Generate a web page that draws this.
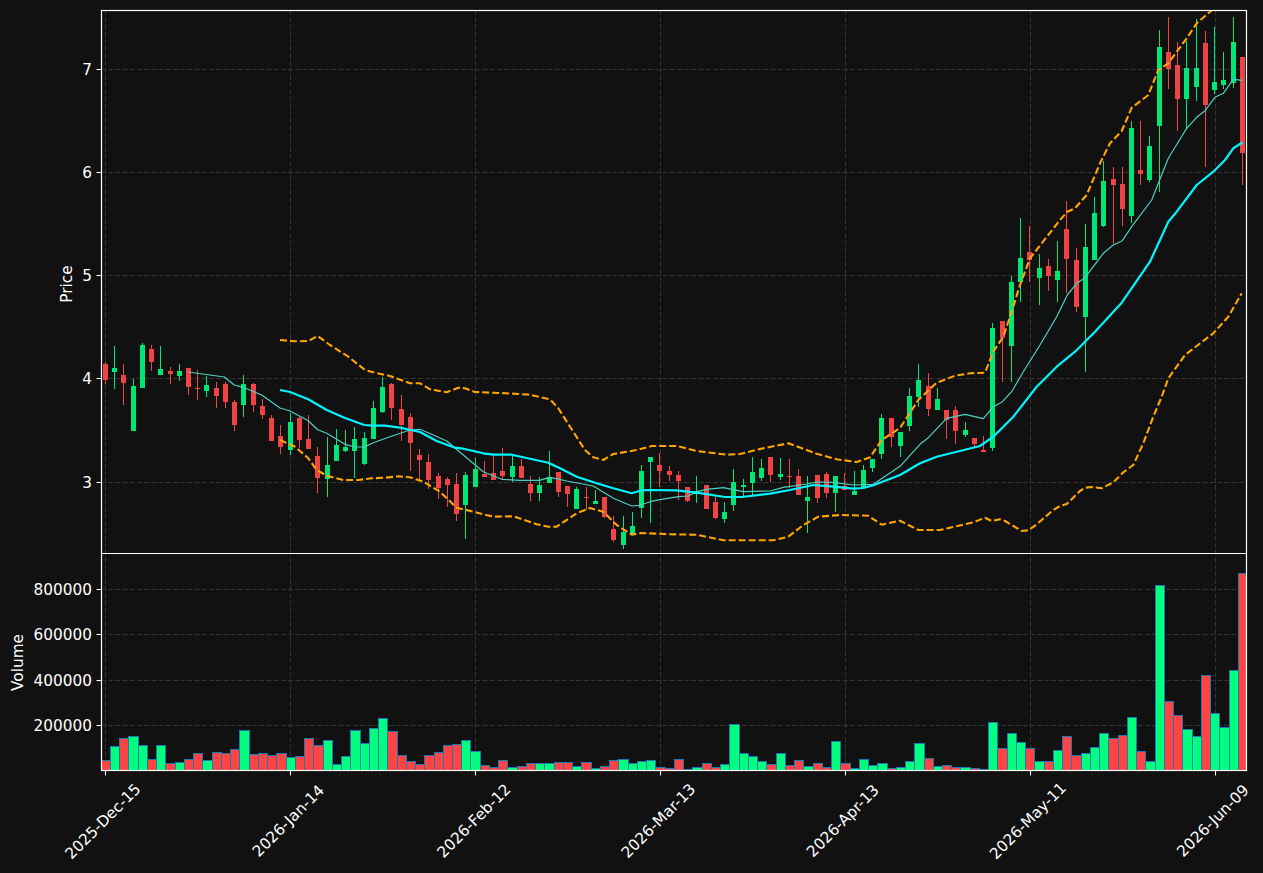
<!DOCTYPE html>
<html lang="en">
<head>
  <meta charset="UTF-8" />
  <title>Price chart</title>
  <script src="https://cdn.jsdelivr.net/npm/@tailwindcss/browser@4"></script>
</head>
<body class="bg-[#111111] overflow-hidden">
  <svg id="chart" class="block w-[1263px] h-[873px] fill-white text-[15.3px] [font-family:'DejaVu_Sans',sans-serif]" viewBox="0 0 1263 873" xmlns="http://www.w3.org/2000/svg">
    <defs>
      <clipPath id="priceClip"><rect x="101" y="10" width="1146" height="543" /></clipPath>
      <clipPath id="volClip"><rect x="101" y="553" width="1146" height="217" /></clipPath>
    </defs>

    <g id="grid" stroke="#333333" stroke-width="1" stroke-dasharray="5 2.2"></g>
    <g id="candles" clip-path="url(#priceClip)" shape-rendering="crispEdges"></g>
    <g clip-path="url(#priceClip)" fill="none" stroke-linejoin="round">
      <polyline id="ma10" stroke="#4dd0c4" stroke-width="1.2" />
      <polyline id="ma20" stroke="#00f5ff" stroke-width="2.2" />
      <polyline id="bbUp" stroke="#ffa500" stroke-width="2.1" stroke-dasharray="7 3" />
      <polyline id="bbLow" stroke="#ffa500" stroke-width="2.1" stroke-dasharray="7 3" />
    </g>
    <g id="volume" clip-path="url(#volClip)"></g>

    <!-- axes -->
    <g fill="none" stroke="#ffffff" stroke-width="1.2">
      <rect x="101.5" y="10.5" width="1145" height="760" />
      <line x1="101.5" y1="553.5" x2="1246.5" y2="553.5" />
    </g>
    <g id="ticks" stroke="#ffffff" stroke-width="1.1"></g>

    <!-- y labels -->
    <g text-anchor="end">
      <text x="92" y="74.5">7</text>
      <text x="92" y="177.5">6</text>
      <text x="92" y="281">5</text>
      <text x="92" y="384">4</text>
      <text x="92" y="487.5">3</text>
      <text x="92" y="594.5">800000</text>
      <text x="92" y="640">600000</text>
      <text x="92" y="685.5">400000</text>
      <text x="92" y="731">200000</text>
    </g>
    <text transform="translate(72 284) rotate(-90)" text-anchor="middle">Price</text>
    <text transform="translate(23 662.5) rotate(-90)" text-anchor="middle">Volume</text>

    <!-- date labels -->
    <g text-anchor="middle">
      <text transform="translate(103 821.5) rotate(-45) translate(0 5)">2025-Dec-15</text>
      <text transform="translate(288.5 821) rotate(-45) translate(0 5)">2026-Jan-14</text>
      <text transform="translate(474 821) rotate(-45) translate(0 5)">2026-Feb-12</text>
      <text transform="translate(658.5 821) rotate(-45) translate(0 5)">2026-Mar-13</text>
      <text transform="translate(843 821) rotate(-45) translate(0 5)">2026-Apr-13</text>
      <text transform="translate(1028 821) rotate(-45) translate(0 5)">2026-May-11</text>
      <text transform="translate(1213 821) rotate(-45) translate(0 5)">2026-Jun-09</text>
    </g>
  </svg>

  <script>
    const NS = 'http://www.w3.org/2000/svg';
    const X0 = 105.3, STEP = 9.245;
    const UP = '#00e676', DOWN = '#f04444';
    const barX = i => X0 + STEP * i;

    // color, wick top, body top, body bottom, wick bottom (pixel rows of the plot)
    const candles = [
      ['r',362,364,380,384],['g',346,368,372,389],['r',364,375,383,405],['g',379,386,431,431],['g',343,345,388,388],
      ['r',345,349,362,371],['g',346,369,375,375],['r',367,371,374,384],['g',364,371,376,381],['r',368,368,387,395],
      ['r',370,388,389,400],['g',376,385,391,397],['r',382,388,396,408],['r',382,384,402,408],['r',400,402,425,431],
      ['g',375,384,405,417],['r',383,384,405,412],['r',399,406,415,419],['r',415,418,441,441],['r',425,436,447,454],
      ['g',413,422,450,455],['r',417,418,440,448],['r',415,439,449,449],['r',447,456,478,493],['g',437,465,479,497],
      ['g',429,445,461,461],['g',430,447,451,452],['g',427,439,451,478],['g',432,438,464,465],['g',401,408,439,439],
      ['g',377,387,412,413],['r',383,384,408,420],['r',395,409,425,441],['r',413,417,443,471],['r',449,455,460,480],
      ['r',454,462,480,489],['r',473,476,488,499],['r',477,479,485,507],['r',473,484,514,521],['g',472,475,505,539],
      ['g',458,469,487,487],['r',461,474,477,477],['r',453,473,480,480],['r',448,471,476,480],['g',455,466,477,482],
      ['r',459,466,478,478],['r',476,484,493,501],['g',477,485,493,501],['g',451,477,483,483],['r',472,472,492,497],
      ['r',486,486,494,507],['g',487,489,509,509],['r',487,497,498,510],['g',490,501,504,504],['r',497,497,517,518],
      ['r',516,529,540,542],['g',516,532,545,549],['g',512,526,535,535],['g',465,471,508,518],['g',457,457,462,523],
      ['r',453,465,471,487],['r',466,471,475,481],['r',471,475,481,500],['r',487,487,501,502],['g',476,491,494,503],
      ['r',485,485,509,509],['r',497,502,518,519],['g',502,512,519,523],['g',469,482,505,511],['g',479,485,487,496],
      ['g',457,472,483,495],['g',459,468,478,481],['r',457,457,475,482],['g',458,474,477,480],['r',459,476,477,488],
      ['r',469,476,495,495],['g',476,497,501,533],['r',475,475,498,503],['r',472,474,493,498],['g',476,476,493,512],
      ['r',473,486,490,490],['g',471,491,495,495],['g',465,470,488,488],['g',459,459,468,472],['g',414,418,454,459],
      ['r',418,418,437,447],['g',432,432,446,457],['g',388,396,426,431],['g',364,380,397,407],['r',373,386,409,416],
      ['g',388,399,410,410],['r',410,410,420,439],['r',406,410,431,444],['g',422,430,435,437],['r',438,438,444,447],
      ['r',436,450,452,452],['g',323,328,448,451],['r',321,321,338,382],['g',276,282,346,382],['g',218,258,282,302],
      ['r',226,252,260,282],['g',254,268,278,305],['r',259,266,276,291],['g',241,271,280,302],['r',201,229,259,293],
      ['r',248,260,307,312],['g',224,247,317,372],['g',197,213,260,260],['g',161,181,226,227],['r',167,179,185,244],
      ['r',167,184,209,226],['g',121,128,216,223],['r',121,170,174,185],['g',136,146,180,182],['g',30,47,126,192],
      ['r',17,52,69,89],['r',42,65,99,131],['g',41,68,99,130],['g',19,68,87,101],['r',31,43,105,167],
      ['g',27,82,90,94],['g',52,80,85,89],['g',17,42,83,88],['r',57,57,153,185]
    ];

    const volTops = [
      760,746,738,736,745,759,745,763,762,759,753,760,752,753,749,730,754,753,755,753,
      757,756,738,745,740,764,756,730,743,728,718,731,755,761,764,755,752,745,744,740,
      751,765,767,760,767,766,763,763,763,762,762,766,762,768,766,760,759,763,761,760,
      767,768,759,769,767,763,767,764,724,753,756,761,764,753,765,760,766,763,767,741,
      763,768,759,765,763,768,767,761,743,758,766,765,767,767,768,769,722,748,733,742,
      748,761,761,750,736,755,753,747,733,738,735,717,751,761,585,701,715,729,736,675,
      713,727,670,573
    ];

    const ma10 = '188.3,372 224.3,377 234.3,385 243.3,387.3 261.7,395 280,408 290,411 308.3,420.7 317.7,429.7 326.7,433.3 345,444.3 355,447 364.3,447 373.3,442.7 390,436.7 410,430 420,429.3 433.3,435 446.7,441 463.3,455 483.3,471.7 501.7,479.3 520,480.3 539.3,480.3 550,477.3 566.7,481 593.3,486 613.3,498.3 631.7,506 640,505.3 650,501.7 660,499.7 678.3,496.7 688.3,496 696.7,491.7 706.7,489.3 723.3,487.7 743.3,491.7 770,491 783.3,487.3 806.7,484 816.7,482 833.3,482.3 853.3,485 873.3,484.3 900,466.3 920,444.3 928.3,437.7 946.7,418.3 965,414.3 983.3,418.7 993.3,406.7 1001.7,402.3 1011.7,391.7 1023.3,371.7 1040,345 1056.7,316.7 1067.3,295 1076.7,283.3 1085,277.7 1103.3,253.3 1113.3,245 1122.3,240.7 1131.7,226.7 1151.7,200 1168.3,158.3 1186.7,128.3 1196.7,117.3 1205,110.7 1215,97.3 1223.3,93.3 1233.3,79.3 1242.7,80.3';
    const ma20 = '280,390 290,392 308.3,399.3 326.7,410 345,418 364.3,425 373.3,425.7 385,425.7 400,427.7 420,432 436.7,441 455,447.7 463.3,448.7 483.3,453.3 493.3,454.7 511.7,454.7 530,458.7 548.3,462.7 560,468.3 576.7,476.7 596.7,483.3 613.3,488.3 631.7,493.3 641.7,490.3 650,490 676.7,490.3 696.7,492.7 725,497 741.7,497 770,493.7 790,490 813.3,485 833.3,486.7 853.3,488.7 863.3,488 873.3,485.3 900,475 920,463.3 936.7,456.7 980,446 993.3,436.7 1013.3,416.7 1036.7,386.7 1056.7,366.7 1075,351.7 1095,331.7 1121.7,302.7 1150,261.7 1168.3,221.7 1176.7,211.7 1196.7,185 1213.3,171.7 1225,160 1233.3,148.3 1242.7,142.3';
    const bbUp = '280,340 295,341.3 308.3,341 317.7,336 330,345 348.3,356.7 365,370 375,372.7 390,376 410,383.3 420,383.3 430,389.3 446.7,392.3 458.3,387.7 465,388.3 475,392 506.7,393.3 530,394.7 550,399.3 558.3,408.3 570,426.7 585,450 593.3,457.3 603.3,460 613.3,454 636.7,450 651.7,446 676.7,446 696.7,451 726.7,454.7 740,454 760,449 788.3,443.3 816.7,453.7 836.7,459.3 856.7,462 870,457.3 881.7,440 900,428 918.3,400 936.7,382.7 955,375.7 970,373.3 985,372.7 993.3,351.7 1003.3,336.7 1011.7,311.7 1020,285 1030,258.3 1041.7,243.3 1060,220 1067.3,211.7 1075,208.3 1086.7,195 1100,163.3 1110,143.3 1121.7,131 1131.7,107.7 1148.3,95 1158.3,70 1168.3,63.3 1186.7,38.3 1196.7,23.3 1210,11.7 1222,3';
    const bbLow = '280,440 295,446.7 308.3,458.3 316.7,470 326.7,475.7 343.3,480 358.3,480 371.7,478.3 385,477.7 398.3,476.3 410,477.3 423.3,481.7 440,491.7 456.7,507.7 473.3,511.7 493.3,516.7 513.3,516.3 536.7,524.3 548.3,526.7 556.7,526.7 576.7,513.3 590,508 603.3,511.7 616.7,525 631.7,534.7 641.7,533 670,534.3 696.7,534.7 723.3,540.3 773.3,540.3 788.3,536.7 803.3,525 818.3,516.7 840,515 868.3,515.7 881.7,524.7 900,520.7 918.3,530 940,530 973.3,522.3 985,517.7 991.7,521 1000,519.3 1005,521 1021.7,531 1028.3,530.3 1035,525.7 1053.3,510 1060,506 1066.7,504 1080,491 1085,487.7 1091.7,487 1101.7,488.3 1113.3,482.3 1123.3,472.3 1133.3,465 1143.3,443.3 1153.3,416.7 1161.7,396.7 1168.3,378.3 1185,355 1213.3,333.3 1228.3,316.7 1241.7,293.3';

    function el(parent, tag, attrs) {
      const node = document.createElementNS(NS, tag);
      for (const k in attrs) node.setAttribute(k, attrs[k]);
      parent.appendChild(node);
      return node;
    }

    function drawGrid() {
      const grid = document.getElementById('grid');
      const ticks = document.getElementById('ticks');
      [69.5, 172.5, 275.5, 378.5, 482.5, 589.5, 634.5, 680.5, 725.5].forEach(y => {
        el(grid, 'line', { x1: 101, y1: y, x2: 1246, y2: y });
        el(ticks, 'line', { x1: 96.5, y1: y, x2: 101, y2: y });
      });
      for (let i = 0; i <= 120; i += 20) {
        const x = Math.round(barX(i)) + 0.5;
        el(grid, 'line', { x1: x, y1: 10, x2: x, y2: 770 });
        el(ticks, 'line', { x1: x, y1: 770, x2: x, y2: 775.5 });
      }
    }

    function drawCandles() {
      const g = document.getElementById('candles');
      candles.forEach((c, i) => {
        const left = Math.round(barX(i) - 2.5);
        const color = c[0] === 'g' ? UP : DOWN;
        el(g, 'rect', { x: left + 2, y: c[1], width: 1, height: c[4] - c[1], fill: color });
        el(g, 'rect', { x: left, y: c[2], width: 5, height: Math.max(c[3] - c[2], 1), fill: color });
      });
    }

    function drawVolume() {
      const g = document.getElementById('volume');
      const left = i => Math.round(barX(i) - 4.6) + 0.5;
      volTops.forEach((top, i) => {
        const fill = candles[i][0] === 'g' ? '#00ff7f' : '#ff4444';
        el(g, 'rect', {
          x: left(i), y: top + 0.5, width: left(i + 1) - left(i), height: 771 - top,
          fill, stroke: '#1f77b4', 'stroke-width': 1
        });
      });
    }

    document.getElementById('ma10').setAttribute('points', ma10);
    document.getElementById('ma20').setAttribute('points', ma20);
    document.getElementById('bbUp').setAttribute('points', bbUp);
    document.getElementById('bbLow').setAttribute('points', bbLow);
    drawGrid();
    drawCandles();
    drawVolume();
  </script>
</body>
</html>
